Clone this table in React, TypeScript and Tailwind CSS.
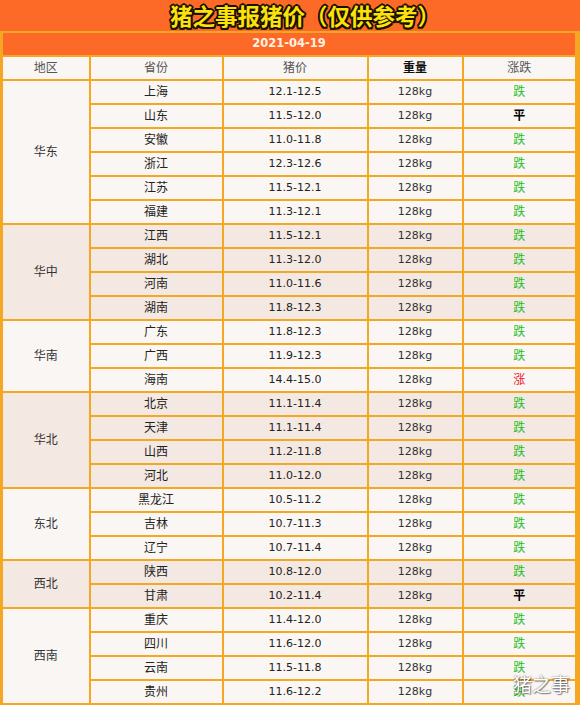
import React from 'react';

type Trend = '跌' | '平' | '涨';

interface Row {
  province: string;
  price: string;
  trend: Trend;
}

interface Region {
  name: string;
  tinted: boolean;
  rows: Row[];
}

const regions: Region[] = [
  {
    name: '华东',
    tinted: false,
    rows: [
      { province: '上海', price: '12.1-12.5', trend: '跌' },
      { province: '山东', price: '11.5-12.0', trend: '平' },
      { province: '安徽', price: '11.0-11.8', trend: '跌' },
      { province: '浙江', price: '12.3-12.6', trend: '跌' },
      { province: '江苏', price: '11.5-12.1', trend: '跌' },
      { province: '福建', price: '11.3-12.1', trend: '跌' },
    ],
  },
  {
    name: '华中',
    tinted: true,
    rows: [
      { province: '江西', price: '11.5-12.1', trend: '跌' },
      { province: '湖北', price: '11.3-12.0', trend: '跌' },
      { province: '河南', price: '11.0-11.6', trend: '跌' },
      { province: '湖南', price: '11.8-12.3', trend: '跌' },
    ],
  },
  {
    name: '华南',
    tinted: false,
    rows: [
      { province: '广东', price: '11.8-12.3', trend: '跌' },
      { province: '广西', price: '11.9-12.3', trend: '跌' },
      { province: '海南', price: '14.4-15.0', trend: '涨' },
    ],
  },
  {
    name: '华北',
    tinted: true,
    rows: [
      { province: '北京', price: '11.1-11.4', trend: '跌' },
      { province: '天津', price: '11.1-11.4', trend: '跌' },
      { province: '山西', price: '11.2-11.8', trend: '跌' },
      { province: '河北', price: '11.0-12.0', trend: '跌' },
    ],
  },
  {
    name: '东北',
    tinted: false,
    rows: [
      { province: '黑龙江', price: '10.5-11.2', trend: '跌' },
      { province: '吉林', price: '10.7-11.3', trend: '跌' },
      { province: '辽宁', price: '10.7-11.4', trend: '跌' },
    ],
  },
  {
    name: '西北',
    tinted: true,
    rows: [
      { province: '陕西', price: '10.8-12.0', trend: '跌' },
      { province: '甘肃', price: '10.2-11.4', trend: '平' },
    ],
  },
  {
    name: '西南',
    tinted: false,
    rows: [
      { province: '重庆', price: '11.4-12.0', trend: '跌' },
      { province: '四川', price: '11.6-12.0', trend: '跌' },
      { province: '云南', price: '11.5-11.8', trend: '跌' },
      { province: '贵州', price: '11.6-12.2', trend: '跌' },
    ],
  },
];

const trendClass: Record<Trend, string> = {
  跌: 'text-[#1fbd1f]',
  平: 'text-black font-bold',
  涨: 'text-[#e8232d]',
};

const cell = 'border-2 border-[#f5a623] text-center align-middle p-0';

export default function App() {
  return (
    <div className="relative w-[580px] h-[705px] overflow-hidden bg-[#fd6a27] font-['DejaVu_Sans','Noto_Sans_CJK_SC',sans-serif]">
      <div className="h-[31px] flex items-center justify-center pl-[30px]">
        <h1 className="text-[22.5px] leading-none font-bold text-[#fbe20a] font-['Noto_Sans_CJK_SC',sans-serif] [text-shadow:-1.5px_-1.5px_0_#1a1000,1.5px_-1.5px_0_#1a1000,-1.5px_1.5px_0_#1a1000,1.5px_1.5px_0_#1a1000,0_2px_0_#1a1000,0_-2px_0_#1a1000,2px_0_0_#1a1000,-2px_0_0_#1a1000]">
          猪之事报猪价（仅供参考）
        </h1>
      </div>
      <table className="w-[580px] table-fixed border-collapse border-l-[3px] border-r-[5px] border-b-[3px] border-[#f5a623]">
        <colgroup>
          <col className="w-[88px]" />
          <col className="w-[133px]" />
          <col className="w-[145px]" />
          <col className="w-[95px]" />
          <col />
        </colgroup>
        <tbody>
          <tr className="h-[24px] bg-[#fd6a27]">
            <td colSpan={5} className={`${cell} text-[11.5px] font-bold text-[#fff1e4]`}>
              2021-04-19
            </td>
          </tr>
          <tr className="h-[24px] bg-[#faf6f3] text-[12px] text-[#555]">
            <td className={cell}>地区</td>
            <td className={cell}>省份</td>
            <td className={cell}>猪价</td>
            <td className={`${cell} font-bold text-[#111]`}>重量</td>
            <td className={cell}>涨跌</td>
          </tr>
          {regions.map((region) =>
            region.rows.map((row, i) => (
              <tr
                key={row.province}
                className={`h-[24px] ${region.tinted ? 'bg-[#f4e8e2]' : 'bg-[#faf6f3]'}`}
              >
                {i === 0 && (
                  <td rowSpan={region.rows.length} className={`${cell} text-[12px] text-[#333]`}>
                    {region.name}
                  </td>
                )}
                <td className={`${cell} text-[12px] text-[#222]`}>{row.province}</td>
                <td className={`${cell} text-[11px] text-[#222]`}>{row.price}</td>
                <td className={`${cell} text-[11px] text-[#333]`}>128kg</td>
                <td className={`${cell} text-[12px] ${trendClass[row.trend]}`}>{row.trend}</td>
              </tr>
            )),
          )}
        </tbody>
      </table>
      <div className="absolute right-[10px] bottom-[12px] text-[19px] leading-none text-white font-['Noto_Sans_CJK_SC',sans-serif] [text-shadow:0_0_2px_rgba(0,0,0,0.6),1px_1px_1px_rgba(0,0,0,0.4)]">
        猪之事
      </div>
    </div>
  );
}
